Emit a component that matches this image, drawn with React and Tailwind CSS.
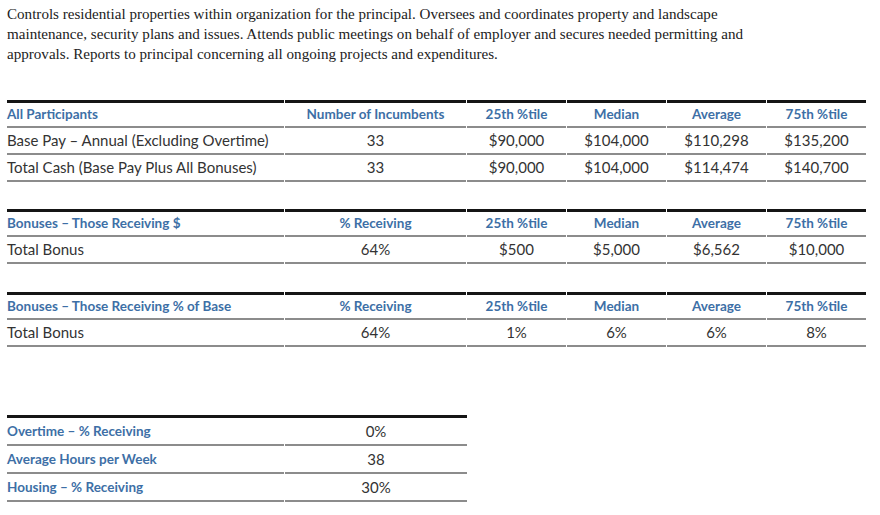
import React from 'react';

const sans = { fontFamily: 'Lato, "Open Sans", sans-serif' };

const cols = 'grid grid-cols-[277px_181px_99px_99px_99px_99px] gap-x-px';

const Cell = ({ children, head, left, h = 'h-[27px]' }) => (
  <div
    className={`${h} flex items-center border-b-2 border-[#8c8c8c] ${
      left ? 'justify-start' : 'justify-center'
    } ${head ? 'text-[13.5px] font-bold text-[#3d6fa6]' : 'text-[15px] text-[#333]'}`}
  >
    {children}
  </div>
);

const StatTable = ({ header, rows, className = '' }) => (
  <div className={`${cols} w-[859px] ${className}`}>
    {header.map((h, i) => (
      <div key={i} className="border-t-[3px] border-[#151515]">
        <Cell head left={i === 0} h="h-[25px]">
          {h}
        </Cell>
      </div>
    ))}
    {rows.map((row) =>
      row.map((v, i) => (
        <Cell key={row[0] + i} left={i === 0}>
          {v}
        </Cell>
      ))
    )}
  </div>
);

export default function App() {
  return (
    <div className="bg-white w-[880px] h-[515px] pl-[7px] pt-[4px]" style={sans}>
      <p
        className="text-[15.1px] leading-[20px] text-[#222] whitespace-nowrap"
        style={{ fontFamily: '"Liberation Serif", serif' }}
      >
        Controls residential properties within organization for the principal. Oversees and coordinates property and landscape
        <br />
        maintenance, security plans and issues. Attends public meetings on behalf of employer and secures needed permitting and
        <br />
        approvals. Reports to principal concerning all ongoing projects and expenditures.
      </p>

      <StatTable
        className="mt-[36px]"
        header={['All Participants', 'Number of Incumbents', '25th %tile', 'Median', 'Average', '75th %tile']}
        rows={[
          ['Base Pay – Annual (Excluding Overtime)', '33', '$90,000', '$104,000', '$110,298', '$135,200'],
          ['Total Cash (Base Pay Plus All Bonuses)', '33', '$90,000', '$104,000', '$114,474', '$140,700'],
        ]}
      />

      <StatTable
        className="mt-[27px]"
        header={['Bonuses – Those Receiving $', '% Receiving', '25th %tile', 'Median', 'Average', '75th %tile']}
        rows={[['Total Bonus', '64%', '$500', '$5,000', '$6,562', '$10,000']]}
      />

      <StatTable
        className="mt-[28px]"
        header={['Bonuses – Those Receiving % of Base', '% Receiving', '25th %tile', 'Median', 'Average', '75th %tile']}
        rows={[['Total Bonus', '64%', '1%', '6%', '6%', '8%']]}
      />

      <div className="grid grid-cols-[277px_182px] gap-x-px w-[460px] mt-[68px] border-t-[3px] border-[#151515]">
        {[
          ['Overtime – % Receiving', '0%'],
          ['Average Hours per Week', '38'],
          ['Housing – % Receiving', '30%'],
        ].map(([label, v]) => (
          <React.Fragment key={label}>
            <div className="h-[28px] flex items-center border-b-2 border-[#8c8c8c] text-[13.5px] font-bold text-[#3d6fa6]">
              {label}
            </div>
            <div className="h-[28px] flex items-center justify-center border-b-2 border-[#8c8c8c] text-[15px] text-[#333]">
              {v}
            </div>
          </React.Fragment>
        ))}
      </div>
    </div>
  );
}
